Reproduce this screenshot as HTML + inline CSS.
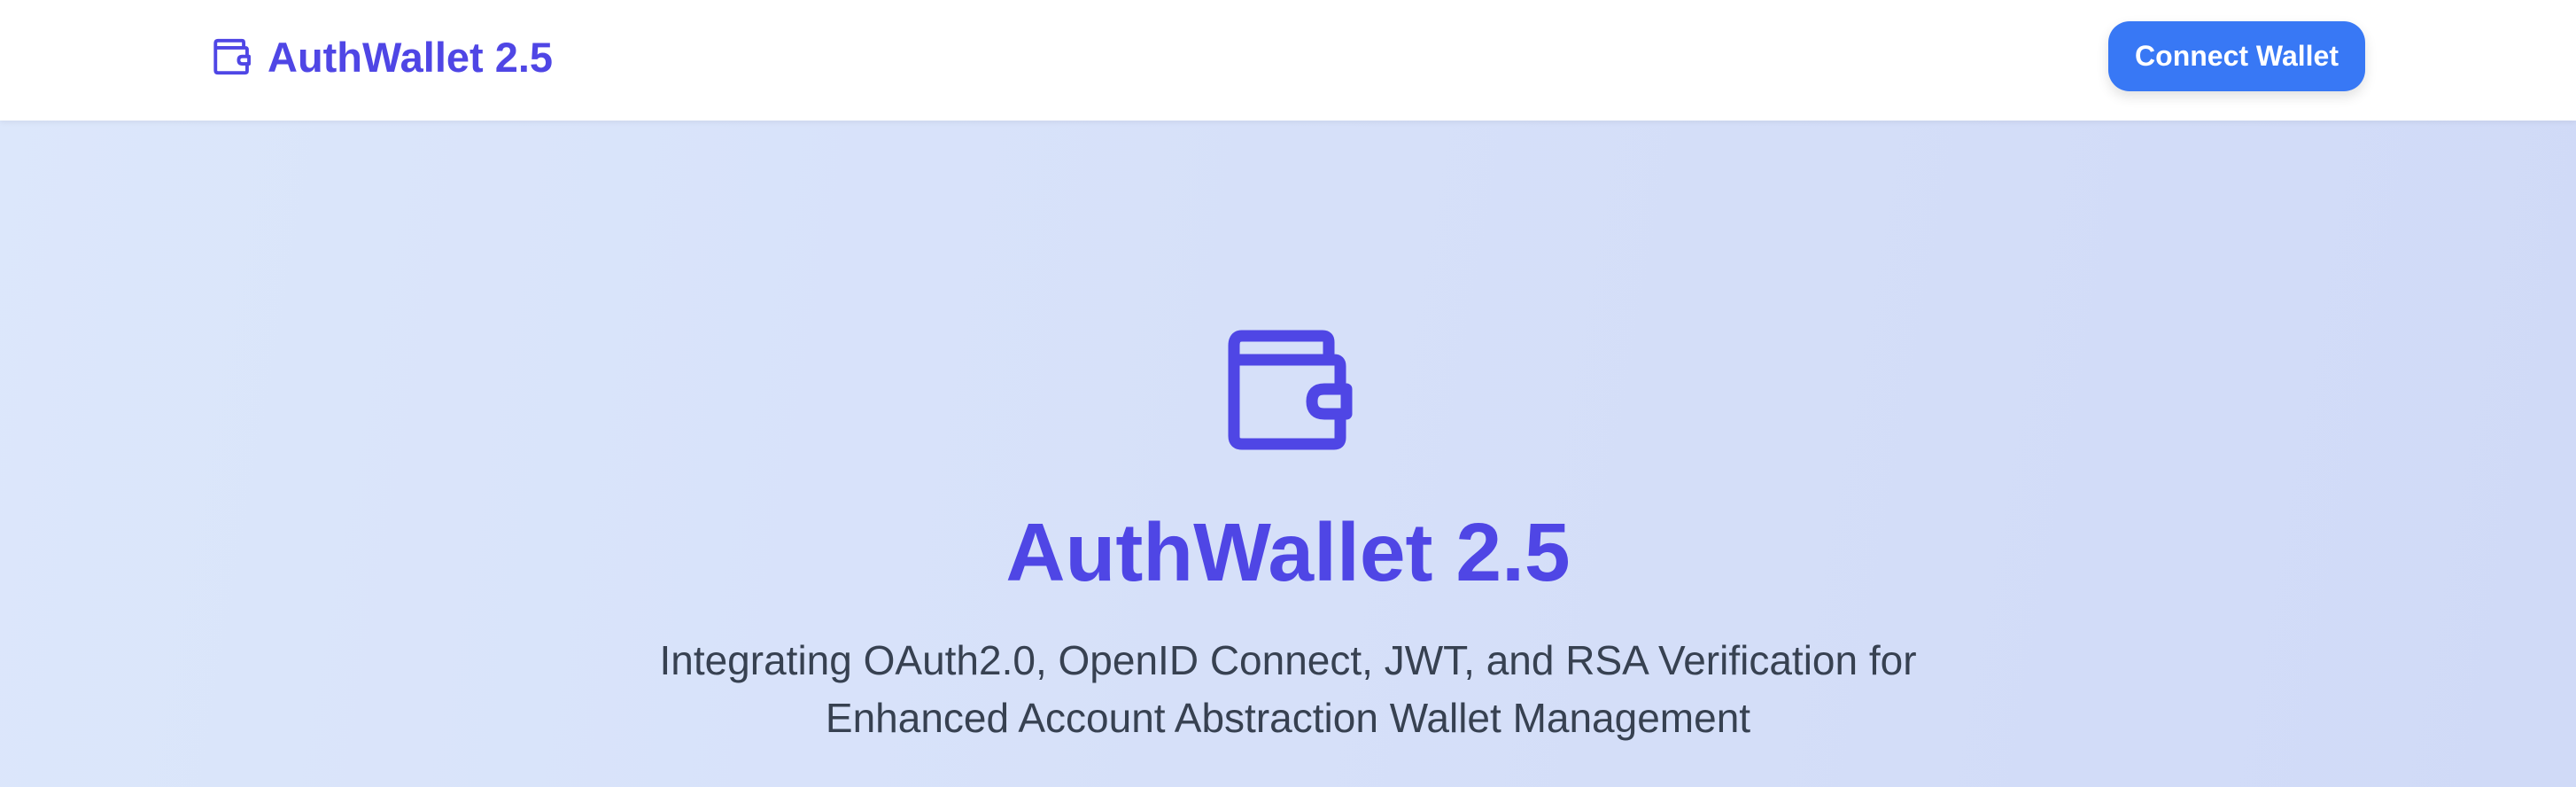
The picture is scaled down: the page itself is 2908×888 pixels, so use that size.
<!DOCTYPE html>
<html><head><meta charset="utf-8"><style>
*{margin:0;padding:0;box-sizing:border-box}
html,body{width:2908px;height:888px;overflow:hidden}
body{font-family:"Liberation Sans",sans-serif;background:linear-gradient(100deg,#dce7fb 0%,#d6e0f9 50%,#d0daf7 100%);position:relative}
.hdr{position:absolute;left:0;top:0;width:2908px;height:136px;background:#fff;box-shadow:0 2px 6px rgba(0,0,0,0.06)}
.logo{position:absolute;left:302px;top:37px;font-size:47px;font-weight:bold;color:#4f46e5;line-height:56px;white-space:nowrap}
.btn{position:absolute;left:2380px;top:24px;width:290px;height:79px;background:#3878f5;border-radius:24px;color:#fff;font-weight:bold;font-size:32px;text-align:center;line-height:79px;box-shadow:0 6px 14px rgba(0,0,0,0.12)}
.title{position:absolute;left:0;width:2908px;top:573px;text-align:center;font-size:93px;font-weight:bold;color:#4f46e5;line-height:100px;white-space:nowrap}
.sub{position:absolute;left:0;width:2908px;top:713px;text-align:center;font-size:46px;color:#374151;line-height:65px}
svg{position:absolute}
</style></head><body>
<div class="hdr">
<svg style="left:238px;top:42px" width="48" height="44" viewBox="1380 366 152 148" fill="none" stroke="#4f46e5" stroke-width="13" stroke-linejoin="round" stroke-linecap="round">
<path d="M1500 406 V386 Q1500 379 1493 379 H1402 Q1393 379 1393 390 V492 Q1393 501 1402 501 H1506 Q1513 501 1513 494 V467 M1513 439 V413 Q1513 406 1506 406 H1400"/>
<path d="M1495 439 H1520 V467 H1495 Q1481 467 1481 453 Q1481 439 1495 439 Z"/>
</svg>
<div class="logo">AuthWallet 2.5</div>
<div class="btn">Connect Wallet</div>
</div>
<svg style="left:1380px;top:366px" width="152" height="148" viewBox="1380 366 152 148" fill="none" stroke="#4f46e5" stroke-width="13" stroke-linejoin="round" stroke-linecap="round">
<path d="M1500 406 V386 Q1500 379 1493 379 H1402 Q1393 379 1393 390 V492 Q1393 501 1402 501 H1506 Q1513 501 1513 494 V467 M1513 439 V413 Q1513 406 1506 406 H1400"/>
<path d="M1495 439 H1520 V467 H1495 Q1481 467 1481 453 Q1481 439 1495 439 Z"/>
</svg>
<div class="title">AuthWallet 2.5</div>
<div class="sub">Integrating OAuth2.0, OpenID Connect, JWT, and RSA Verification for<br>Enhanced Account Abstraction Wallet Management</div>
</body></html>
